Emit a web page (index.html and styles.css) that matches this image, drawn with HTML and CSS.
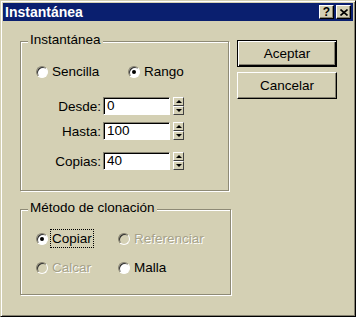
FILE: index.html
```html
<!DOCTYPE html>
<html lang="es">
<head>
    <meta charset="UTF-8">
    <title>Instantánea</title>
    <link rel="stylesheet" href="styles.css">
</head>
<body>
<div class="window">
    <div class="titlebar">
        <span class="title">Instantánea</span>
        <div class="caption-buttons">
            <span class="cap-btn help">?</span>
            <span class="cap-btn close">
                <svg width="8" height="7" viewBox="0 0 8 7"><path d="M0.5 0.5 L7.5 6.5 M7.5 0.5 L0.5 6.5" stroke="#000" stroke-width="1.6" fill="none"/></svg>
            </span>
        </div>
    </div>
    <div class="content">
        <div class="left">
            <div class="group group-snap">
                <div class="legend">Instantánea</div>
                <div class="radio-row first">
                    <div class="option col-a"><span class="radio"></span><span>Sencilla</span></div>
                    <div class="option"><span class="radio checked"></span><span>Rango</span></div>
                </div>
                <div class="field f1">
                    <span class="field-label">Desde:</span>
                    <span class="input">0</span>
                    <span class="spin"><span class="spin-btn"><i class="arr up"></i></span><span class="spin-btn"><i class="arr down"></i></span></span>
                </div>
                <div class="field f2">
                    <span class="field-label">Hasta:</span>
                    <span class="input">100</span>
                    <span class="spin"><span class="spin-btn"><i class="arr up"></i></span><span class="spin-btn"><i class="arr down"></i></span></span>
                </div>
                <div class="field f3">
                    <span class="field-label">Copias:</span>
                    <span class="input">40</span>
                    <span class="spin"><span class="spin-btn"><i class="arr up"></i></span><span class="spin-btn"><i class="arr down"></i></span></span>
                </div>
            </div>
            <div class="group group-clone">
                <div class="legend">Método de clonación</div>
                <div class="radio-row first">
                    <div class="option col-b"><span class="radio checked"></span><span class="focus">Copiar</span></div>
                    <div class="option disabled"><span class="radio"></span><span>Referenciar</span></div>
                </div>
                <div class="radio-row second">
                    <div class="option col-b disabled"><span class="radio"></span><span>Calcar</span></div>
                    <div class="option"><span class="radio"></span><span>Malla</span></div>
                </div>
            </div>
        </div>
        <div class="right">
            <button class="btn default">Aceptar</button>
            <button class="btn">Cancelar</button>
        </div>
    </div>
</div>
</body>
</html>
```

FILE: styles.css
```css
body {
    margin: 0;
    font-family: "Liberation Sans", Arial, sans-serif;
    font-size: 13.5px;
    color: #000;
    background: #d4d0b4;
}
.window {
    width: 356px;
    height: 317px;
    box-sizing: border-box;
    border: 1px solid;
    border-color: #d4d0b4 #000 #000 #d4d0b4;
    box-shadow: inset 1px 1px #fff, inset -1px -1px #858170;
    padding: 2px;
    background: #d4d0b4;
}
.titlebar {
    height: 18px;
    background: #0a1f6f;
    display: flex;
    align-items: center;
    justify-content: space-between;
    padding: 0 2px 0 2px;
}
.title {
    color: #fff;
    font-weight: bold;
    font-size: 14px;
}
.caption-buttons {
    display: flex;
    gap: 2px;
}
.cap-btn {
    width: 15px;
    height: 14px;
    box-sizing: border-box;
    background: #d4d0b4;
    border: 1px solid;
    border-color: #fff #000 #000 #fff;
    box-shadow: inset -1px -1px #858170;
    display: flex;
    align-items: center;
    justify-content: center;
}
.help {
    font-weight: bold;
    font-size: 12px;
    line-height: 12px;
}
.content {
    display: flex;
    padding: 19px 0 0 17px;
}
.left {
    width: 211px;
    padding-top: 1px;
}
.group {
    box-sizing: border-box;
    border: 1px solid #8e8a76;
    box-shadow: inset 1px 1px #fff, 1px 1px #fff;
    padding-left: 15px;
}
.group-snap {
    width: 209px;
    height: 150px;
}
.group-clone {
    width: 211px;
    height: 86px;
    margin-top: 18px;
}
.legend {
    width: fit-content;
    margin: -10px 0 0 -8px;
    padding: 0 2px;
    line-height: 16px;
    background: #d4d0b4;
}
.radio-row {
    display: flex;
    align-items: center;
    height: 17px;
}
.group-snap .radio-row.first {
    margin-top: 15px;
}
.group-clone .radio-row.first {
    margin-top: 14px;
}
.radio-row.second {
    margin-top: 12px;
}
.option {
    display: flex;
    align-items: center;
    gap: 4px;
}
.col-a {
    width: 92px;
}
.col-b {
    width: 82px;
}
.radio {
    width: 12px;
    height: 12px;
    box-sizing: border-box;
    border-radius: 50%;
    background: #fff;
    border: 1px solid;
    border-color: #858170 #fff #fff #858170;
    box-shadow: inset 1px 1px #303030;
    display: flex;
    align-items: center;
    justify-content: center;
}
.radio.checked::after {
    content: "";
    width: 4px;
    height: 4px;
    border-radius: 50%;
    background: #000;
}
.disabled {
    color: #a6a28a;
    text-shadow: 1px 1px #fff;
}
.disabled .radio {
    background: #d4d0b4;
}
.focus {
    outline: 1px dotted #000;
    outline-offset: 0;
    padding: 0 1px;
    margin-left: -1px;
    line-height: 17px;
}
.field {
    display: flex;
    align-items: center;
    height: 18px;
}
.f1 {
    margin-top: 17px;
}
.f2 {
    margin-top: 7px;
}
.f3 {
    margin-top: 12px;
}
.field-label {
    width: 65px;
    text-align: right;
    margin-right: 2px;
}
.input {
    width: 67px;
    height: 18px;
    box-sizing: border-box;
    background: #fff;
    border: 1px solid;
    border-color: #858170 #fff #fff #858170;
    box-shadow: inset 1px 1px #000;
    padding-left: 3px;
    line-height: 16px;
}
.spin {
    margin-left: 3px;
    width: 11px;
    height: 18px;
    display: flex;
    flex-direction: column;
}
.spin-btn {
    height: 9px;
    box-sizing: border-box;
    background: #d4d0b4;
    border: 1px solid;
    border-color: #fff #404040 #404040 #fff;
    display: flex;
    align-items: center;
    justify-content: center;
}
.arr {
    width: 0;
    height: 0;
    border-left: 3px solid transparent;
    border-right: 3px solid transparent;
}
.arr.up {
    border-bottom: 3px solid #000;
}
.arr.down {
    border-top: 3px solid #000;
}
.right {
    margin-left: 6px;
    width: 100px;
    display: flex;
    flex-direction: column;
    gap: 5px;
}
.btn {
    width: 100px;
    height: 27px;
    box-sizing: border-box;
    background: #d4d0b4;
    border: 1px solid;
    border-color: #fff #000 #000 #fff;
    box-shadow: inset -1px -1px #858170;
    font: inherit;
    color: #000;
    padding: 0;
}
.btn.default {
    border: 1px solid #000;
    box-shadow: inset 1px 1px #fff, inset -1px -1px #000, inset -2px -2px #858170;
}
```
